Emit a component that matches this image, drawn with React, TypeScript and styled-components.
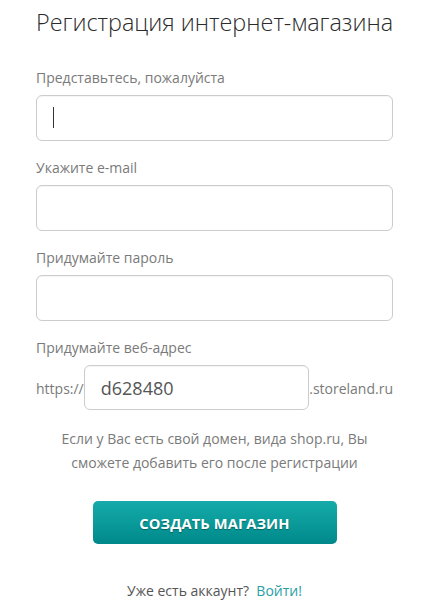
import React from "react";
import styled, { createGlobalStyle } from "styled-components";

const Global = createGlobalStyle`
  html, body { margin: 0; padding: 0; background: #fff; }
  body { font-family: "Open Sans", "Liberation Sans", Arial, sans-serif; }
  * { box-sizing: border-box; }
`;

const Page = styled.div`
  width: 429px;
  padding: 6px 36px 0 36px;
  display: flex;
  flex-direction: column;
`;

const Title = styled.h1`
  margin: 0 0 30px 0;
  font-size: 23.4px;
  line-height: 32px;
  font-weight: 300;
  color: #2b2b2b;
  text-align: center;
  white-space: nowrap;
`;

const Group = styled.div`
  display: flex;
  flex-direction: column;
  margin-bottom: 17px;
`;

const Label = styled.label`
  font-size: 14px;
  line-height: 20px;
  color: #7a7a7a;
  margin-bottom: 7px;
`;

const FieldWrap = styled.div`
  position: relative;
  flex: 1;
  display: flex;
`;

const Input = styled.input<{ $h?: number }>`
  width: 100%;
  height: ${(p) => p.$h ?? 46}px;
  border: 1px solid #cccccc;
  border-radius: 6px;
  padding: 0 16px;
  font-family: "Open Sans", "Liberation Sans", Arial, sans-serif;
  font-size: 18px;
  color: #555;
  background: #fff;
  outline: none;
  box-shadow: inset 0 1px 1px rgba(0, 0, 0, 0.04);
`;

const Caret = styled.span`
  position: absolute;
  left: 17px;
  top: 12px;
  width: 1px;
  height: 21px;
  background: #333;
`;

const AddressRow = styled.div`
  display: flex;
  align-items: center;
`;

const Affix = styled.span`
  font-size: 14px;
  color: #7a7a7a;
  white-space: nowrap;
  padding-top: 2px;
`;

const Note = styled.p`
  margin: 0 0 26px 0;
  font-size: 14px;
  line-height: 24px;
  color: #7a7a7a;
  text-align: center;
`;

const Button = styled.button`
  align-self: center;
  width: 244px;
  height: 43px;
  border: none;
  border-radius: 5px;
  background: linear-gradient(to bottom, #16aaaa 0%, #0a9b9a 50%, #00888a 100%);
  color: #fff;
  font-family: "Open Sans", "Liberation Sans", Arial, sans-serif;
  font-weight: 700;
  font-size: 14.7px;
  letter-spacing: 0.1px;
  text-transform: uppercase;
  text-shadow: 0 1px 1px rgba(0, 0, 0, 0.35);
  cursor: pointer;
`;

const Footer = styled.p`
  margin: 35px 0 0 0;
  font-size: 14px;
  line-height: 24px;
  color: #555;
  text-align: center;
  white-space: pre;
`;

const Link = styled.a`
  color: #2a9ea6;
  text-decoration: none;
`;

export default function App() {
  return (
    <>
      <Global />
      <Page>
        <Title>Регистрация интернет-магазина</Title>
        <Group>
          <Label>Представьтесь, пожалуйста</Label>
          <FieldWrap>
            <Input readOnly value="" />
            <Caret />
          </FieldWrap>
        </Group>
        <Group>
          <Label>Укажите e-mail</Label>
          <Input readOnly value="" />
        </Group>
        <Group>
          <Label>Придумайте пароль</Label>
          <Input type="password" readOnly value="" />
        </Group>
        <Group>
          <Label>Придумайте веб-адрес</Label>
          <AddressRow>
            <Affix>https://</Affix>
            <FieldWrap>
              <Input $h={45} readOnly value="d628480" />
            </FieldWrap>
            <Affix>.storeland.ru</Affix>
          </AddressRow>
        </Group>
        <Note>
          Если у Вас есть свой домен, вида shop.ru, Вы
          <br />
          сможете добавить его после регистрации
        </Note>
        <Button>Создать магазин</Button>
        <Footer>
          {"Уже есть аккаунт?  "}
          <Link href="#">Войти!</Link>
        </Footer>
      </Page>
    </>
  );
}
